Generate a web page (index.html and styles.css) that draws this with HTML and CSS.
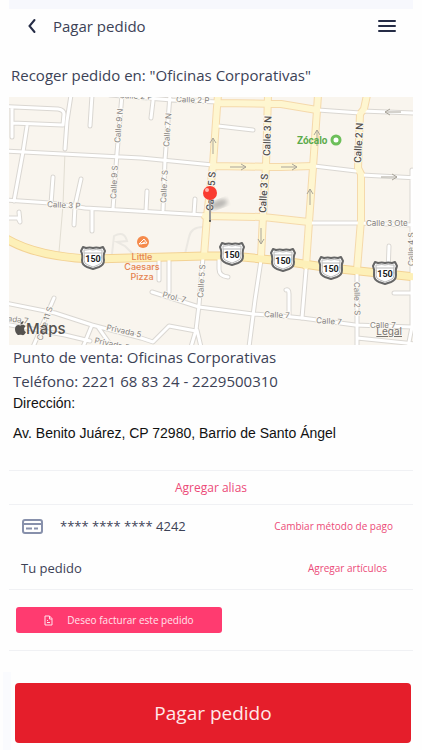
FILE: index.html
```html
<!DOCTYPE html>
<html lang="es">

<head>
  <meta charset="UTF-8">
  <meta name="viewport" content="width=device-width, initial-scale=1.0">
  <title>Pagar pedido</title>
  <link rel="stylesheet" href="styles.css">
</head>

<body>
  <div class="page">
    <header class="header">
      <button class="icon-button" type="button" aria-label="Volver">
        <svg width="10" height="16" viewBox="0 0 10 16"><path d="M7.500 2L2.500 8L7.500 14" /></svg>
      </button>
      <h1>Pagar pedido</h1>
      <button class="icon-button" type="button" aria-label="Menú">
        <svg width="20" height="14" viewBox="0 0 20 14"><path d="M2 2H18M2 7H18M2 12H18" /></svg>
      </button>
    </header>

    <h2>Recoger pedido en: "Oficinas Corporativas"</h2>

    <div class="map">
      <svg class="map-canvas" viewBox="9 97 404 248" role="img" aria-label="Mapa">
        <defs>
          <g id="streets">
            <path d="M5 106.500L58 109Q64 110 64 114L63 125L12 123M12 107V137M71 95L67 121L65 149M92 95L90 126M27 126L23 152L14 201" />
            <path d="M5 151L141 158L213 165M53 177L51 204M81 179L75 206L74 225M5 200L50 203L85 208L205 215M122 95L117 153L113 209M92 209L92 231M5 218H18L20 222L19 212" />
            <path d="M110 95L172 100L218 102M153 101L151 118M170 95L165 160L163 210M218 126L253 130M147 191L146 211M195 199L194 214" />
            <path d="M318 110L360 113M362 111L416 113M314 166L356 171M362 175L416 178M309 223L358 223L416 225M412 170V327" />
            <path d="M5 303L55 313L92 325L141 338L153 342L169 326L196 331M54 298L33 347M92 325L83 347M5 324L65 335L90 341M98 327L112 347" />
            <path d="M203 257L199 305L196 330L191 347M197 330L201 347M152 292L199 307L253 314L281 316L302 318L355 325L412 327M261 260L255 300L249 347M219 258V269Q219 276 228 277M159 259V280M169 258V292" />
            <path d="M286 290Q289 289 289 294L289 316M306 270L302 318M357 272V347M389 246L388 273M394 293H412M357 338L416 344M412 327L408 347" />
          </g>
          <g id="avenues">
            <path d="M218 95L217 107L213 165L207 216L204 256M218 103L281 104L317 110M268 95L266 166L263 216L261 257M213 166L281 167L313 166M205 216L263 217L309 222" />
            <path d="M318 95L317 110L313 167L309 222L306 266M367 95L364 109L360 114L358 168L361 174L361 220L357 270" />
          </g>
          <path id="highway" d="M5 238Q36 257 93 259L204 256H232L283 261L331 268L416 277" />
          <g id="arrow"><path d="M0 8V-8M-3 -3L0 -8L3 -3" /></g>
          <g id="shield">
            <path class="shield-edge" d="M-10 -11L-7 -10Q-3 -11 0 -10Q3 -11 7 -10L10 -11L12 -7Q10 -3 11 2Q11 7 6 9L0 11L-6 9Q-11 7 -11 2Q-10 -3 -12 -7Z" />
            <path class="shield-line" d="M-9 -8L-7 -8Q-3 -9 0 -8Q3 -9 7 -8L9 -8L9 -5H-9ZM-9 -5Q-8 -1 -9 2Q-9 6 -5 7L0 9L5 7Q9 6 9 2Q8 -1 9 -5" />
            <text class="shield-number" y="4">150</text>
          </g>
          <filter id="soft"><feGaussianBlur stdDeviation="2" /></filter>
        </defs>

        <rect class="land" x="9" y="97" width="404" height="248" />
        <path class="boundary" d="M65 151L63 205L59 252" />
        <path class="footway" d="M112 254L114 236Q124 230 127 241L117 242L125 246L133 254M185 254L189 237Q191 227 203 227" />
        <use class="street-casing" href="#streets" />
        <use class="avenue-casing" href="#avenues" />
        <use class="highway-casing" href="#highway" />
        <use class="street" href="#streets" />
        <use class="avenue" href="#avenues" />
        <use class="highway" href="#highway" />

        <g class="arrows">
          <use href="#arrow" transform="translate(213 146)" />
          <use href="#arrow" transform="translate(238 167) rotate(90)" />
          <use href="#arrow" transform="translate(289 167) rotate(90)" />
          <use href="#arrow" transform="translate(317 138)" />
          <use href="#arrow" transform="translate(310 197)" />
          <use href="#arrow" transform="translate(393 112) rotate(-90)" />
          <use href="#arrow" transform="translate(389 177) rotate(90)" />
          <use href="#arrow" transform="translate(261 236) rotate(180)" />
        </g>

        <g class="street-name">
          <text transform="translate(120 143) rotate(-85)">Calle 9 N</text>
          <text transform="translate(116 199) rotate(-87)">Calle 9 S</text>
          <text transform="translate(169 147) rotate(-86)">Calle 7 N</text>
          <text transform="translate(166 203) rotate(-87)">Calle 7 S</text>
          <text transform="translate(203 298) rotate(-86)">Calle 5 S</text>
          <text transform="translate(354 282) rotate(89)">Calle 2 S</text>
          <text transform="translate(414 266) rotate(-90)">Calle 4 S</text>
          <text transform="translate(176 102) rotate(2)">Calle 2 P</text>
          <text transform="translate(119 98) rotate(3)">Calle 2 P</text>
          <text transform="translate(47 207) rotate(3)">Calle 3 P</text>
          <text transform="translate(366 226)">Calle 3 Ote</text>
          <text transform="translate(162 297) rotate(14)">Prol. 7</text>
          <text transform="translate(264 317) rotate(3)">Calle 7</text>
          <text transform="translate(316 323) rotate(4)">Calle 7</text>
          <text transform="translate(370 328)">Calle 7</text>
          <text transform="translate(106 330) rotate(12)">Privada 5</text>
          <text transform="translate(94 343) rotate(12)">Privada 5</text>
          <text transform="translate(-7 319) rotate(8)">Privada 7</text>
          <text transform="translate(42 341) rotate(-72)">Calle 11 S</text>
        </g>
        <g class="avenue-name">
          <text transform="translate(213 211) rotate(-86)">Calle 5 S</text>
          <text transform="translate(270 156) rotate(-88)">Calle 3 N</text>
          <text transform="translate(266 213) rotate(-87)">Calle 3 S</text>
          <text transform="translate(361 163) rotate(-87)">Calle 2 N</text>
        </g>

        <use href="#shield" transform="translate(93 258)" />
        <use href="#shield" transform="translate(232 254)" />
        <use href="#shield" transform="translate(283 260)" />
        <use href="#shield" transform="translate(331 268)" />
        <use href="#shield" transform="translate(385 273)" />

        <g class="plaza">
          <text x="297" y="144">Zócalo</text>
          <circle cx="336" cy="140" r="4" />
        </g>
        <g class="restaurant">
          <circle cx="143" cy="242" r="6" />
          <path d="M139 244L144 239L147 243ZM141 244L145 242" />
          <text x="142" y="260">Little</text>
          <text x="142" y="270">Caesars</text>
          <text x="142" y="280">Pizza</text>
        </g>

        <ellipse class="pin-shadow" cx="219" cy="204" rx="9" ry="4" transform="rotate(-20 219 204)" />
        <path class="pin-needle" d="M210 198V221" />
        <circle class="pin-base" cx="210" cy="221" r="1" />
        <circle class="pin-head" cx="210" cy="193" r="7" />
        <circle class="pin-shine" cx="207" cy="190" r="2" />

        <g class="map-brand">
          <path d="M20.500 325.500C22 324.500 24.500 324.500 25.500 326.500C23.500 328 23.500 330.500 26 332C25 334.500 23.500 335.500 22 335C21 334.500 20 334.500 19 335C17 335.500 15 332 15 329C15 325.500 18 324 20.500 325.500ZM20.500 324.500C20.500 322.500 21.500 321.500 23.500 321C23.500 323 22.500 324.500 20.500 324.500Z" />
          <text x="26" y="334">Maps</text>
        </g>
      </svg>
      <a class="map-legal" href="#">Legal</a>
    </div>

    <section class="store">
      <p>Punto de venta: Oficinas Corporativas</p>
      <p>Teléfono: 2221 68 83 24 - 2229500310</p>
      <address>
        <span>Dirección:</span>
        <span>Av. Benito Juárez, CP 72980, Barrio de Santo Ángel</span>
      </address>
    </section>

    <div class="alias">
      <a href="#">Agregar alias</a>
    </div>

    <section class="order">
      <div class="row">
        <svg class="card-icon" width="21" height="15" viewBox="0 0 21 15">
          <rect x="1" y="1" width="19" height="13" rx="2" />
          <path d="M1 5H20M4 9.500H10M12 9.500H16" />
        </svg>
        <span class="card-number">**** **** **** 4242</span>
        <a href="#">Cambiar método de pago</a>
      </div>
      <div class="row row-items">
        <span>Tu pedido</span>
        <a href="#">Agregar artículos</a>
      </div>
    </section>

    <section class="invoice">
      <button class="invoice-button" type="button">
        <svg width="9" height="11" viewBox="0 0 9 11"><path d="M1 1H5.500L8 3.500V10H1ZM5.500 1V4H8M3 5.500H4M3 7.500H6" /></svg>
        Deseo facturar este pedido
      </button>
    </section>
  </div>

  <footer class="pay-bar">
    <button class="pay-button" type="button">Pagar pedido</button>
  </footer>
</body>

</html>
```

FILE: styles.css
```css
:root {
  --text-color: #3c4256;
  --dark-color: #252c46;
  --pink: #ff3b70;
  --link-color: #ec4a78;
  --red: #e51e2b;
  --line-color: #f0f1f4;
  --tint: #f7f8fd;
}

* {
  box-sizing: border-box;
}

body {
  margin: 0;
  background-color: #fefefe;
  color: var(--text-color);
  font-family: 'Open Sans', 'Noto Sans', sans-serif;
}

button {
  border: none;
  font-family: inherit;
  cursor: pointer;
}

a {
  color: var(--link-color);
  font-size: 10px;
  text-decoration: none;
}

.page {
  margin: 0 9px;
  border-top: 9px solid var(--tint);
}

.header {
  display: flex;
  align-items: center;
  height: 33px;
  padding: 0 12px 0 14px;
}

.header h1 {
  flex: 1;
  margin: 0 0 0 12px;
  font-size: 15px;
  font-weight: 400;
}

.icon-button {
  display: flex;
  padding: 0 4px;
  background: none;
}

.icon-button svg {
  fill: none;
  stroke: var(--dark-color);
  stroke-width: 2;
  stroke-linecap: round;
}

h2 {
  margin: 21px 2px 10px;
  font-size: 15px;
  font-weight: 400;
  line-height: 24px;
}

/* map */
.map {
  position: relative;
}

.map-canvas {
  display: block;
  width: 100%;
  font-family: Roboto, sans-serif;
}

.land {
  fill: #f9f5ee;
}

.boundary {
  fill: none;
  stroke: #e2ded3;
  stroke-width: 1;
}

.footway {
  fill: none;
  stroke: #ebe8e2;
  stroke-width: 2;
}

.street-casing,
.street,
.avenue-casing,
.avenue,
.highway-casing,
.highway {
  fill: none;
  stroke-linecap: round;
  stroke-linejoin: round;
}

.street-casing {
  stroke: #dad7d2;
  stroke-width: 5;
}

.street {
  stroke: #fff;
  stroke-width: 3;
}

.avenue-casing {
  stroke: #f5d9ab;
  stroke-width: 8;
}

.avenue {
  stroke: #fef6d0;
  stroke-width: 6;
}

.highway-casing {
  stroke: #f3d294;
  stroke-width: 9;
}

.highway {
  stroke: #fdf0b8;
  stroke-width: 7;
}

.arrows {
  fill: none;
  stroke: #aaa59a;
  stroke-width: 1;
}

.street-name,
.avenue-name {
  paint-order: stroke;
  stroke: #fbf8f2;
  stroke-width: 2;
}

.street-name {
  fill: #85827f;
  font-family: Inter, sans-serif;
  font-size: 8px;
}

.avenue-name {
  fill: #55524f;
  font-size: 10px;
  font-weight: 500;
}

.shield-edge {
  fill: #fff;
  stroke: #666;
  stroke-width: 2;
  stroke-linejoin: round;
}

.shield-line {
  fill: #fff;
  stroke: #bbb;
  stroke-width: 1;
}

.shield-number {
  fill: #222;
  font-family: 'Liberation Sans Narrow', Roboto, sans-serif;
  font-size: 9px;
  font-weight: 700;
  text-anchor: middle;
}

.plaza text {
  fill: #5cab4b;
  font-size: 10px;
  font-weight: 700;
}

.plaza circle {
  fill: #fff;
  stroke: #6dbf5a;
  stroke-width: 3;
}

.restaurant circle {
  fill: #f58a4b;
}

.restaurant path {
  fill: none;
  stroke: #fff;
  stroke-width: 1;
}

.restaurant text {
  fill: #e5834f;
  font-family: Inter, sans-serif;
  font-size: 9px;
  font-weight: 500;
  text-anchor: middle;
}

.pin-shadow {
  fill: #777;
  opacity: 0.5;
  filter: url(#soft);
}

.pin-needle {
  stroke: #999;
  stroke-width: 2;
}

.pin-base {
  fill: #444;
}

.pin-head {
  fill: #fa3b30;
}

.pin-shine {
  fill: #ffb5ae;
}

.map-brand {
  fill: #55524f;
  font-family: Inter, sans-serif;
  font-size: 15px;
  font-weight: 500;
}

.map-legal {
  position: absolute;
  right: 11px;
  bottom: 8px;
  color: #77736e;
  font-family: Inter, sans-serif;
  line-height: 12px;
  text-decoration: underline;
}

/* store details */
.store {
  padding: 0 4px 27px;
  font-size: 15px;
  line-height: 24px;
}

.store p {
  margin: 0;
}

.store address {
  display: flex;
  flex-direction: column;
  gap: 10px;
  color: #111;
  font-family: 'Liberation Sans', sans-serif;
  font-size: 14px;
  font-style: normal;
  line-height: 20px;
}

.alias {
  display: flex;
  justify-content: center;
  padding: 8px 0;
  border-top: 1px solid var(--line-color);
  border-bottom: 1px solid var(--line-color);
  line-height: 17px;
}

.alias a {
  font-size: 12px;
}

.order {
  border-bottom: 1px solid var(--line-color);
}

.row {
  display: flex;
  align-items: center;
  justify-content: space-between;
  height: 42px;
  padding: 0 20px 0 13px;
  font-size: 13px;
}

.row-items {
  padding: 0 26px 0 12px;
}

.card-icon {
  fill: none;
  stroke: #8790ab;
  stroke-width: 2;
}

.card-number {
  flex: 1;
  margin-left: 17px;
}

.invoice {
  padding: 17px 7px;
  border-bottom: 1px solid var(--line-color);
}

.invoice-button {
  display: flex;
  align-items: center;
  justify-content: center;
  gap: 14px;
  width: 52%;
  min-width: 206px;
  height: 26px;
  border-radius: 3px;
  background-color: var(--pink);
  color: #ffe3ec;
  font-size: 10px;
}

.invoice-button svg {
  fill: none;
  stroke: #ffe3ec;
  stroke-width: 1;
}

.pay-bar {
  margin: 21px 7px 0 3px;
  padding: 11px 4px 7px;
  border-left: 8px solid #fafbfe;
}

.pay-button {
  width: 100%;
  height: 60px;
  border-radius: 4px;
  background-color: var(--red);
  color: #ffe9ea;
  font-size: 19px;
}
```
